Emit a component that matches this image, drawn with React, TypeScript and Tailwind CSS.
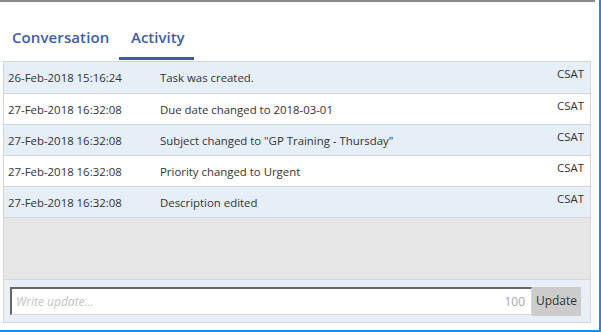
import React from "react";

const rows = [
  { d: "26-Feb-2018 15:16:24", t: "Task was created.", u: "CSAT" },
  { d: "27-Feb-2018 16:32:08", t: "Due date changed to 2018-03-01", u: "CSAT" },
  { d: "27-Feb-2018 16:32:08", t: 'Subject changed to "GP Training - Thursday"', u: "CSAT" },
  { d: "27-Feb-2018 16:32:08", t: "Priority changed to Urgent", u: "CSAT" },
  { d: "27-Feb-2018 16:32:08", t: "Description edited", u: "CSAT" },
];

export default function App() {
  return (
    <div
      className="w-[601px] h-[332px] bg-white border-r-2 border-b-2 border-[#1a8cf0] overflow-hidden"
      style={{ fontFamily: '"Open Sans", "Noto Sans", sans-serif' }}
    >
      <div className="w-[595px] h-[2px] bg-[#888888]" />
      <div className="flex items-end h-[58px] pl-[12px]">
        <div className="text-[15px] font-semibold text-[#3d5daa] pb-[12px] tracking-[0.1px]">Conversation</div>
        <div className="ml-[10px] w-[75px] flex flex-col items-center">
          <div className="text-[15px] font-semibold text-[#3d5daa] pb-[9px] pl-[2px]">Activity</div>
          <div className="h-[3px] w-full bg-[#3d5daa]" />
        </div>
      </div>
      <div className="ml-[3px] mt-[1px] w-[588px] border border-[#d6d6d6] flex flex-col">
        {rows.map((r, i) => (
          <div
            key={i}
            className={`h-[31px] flex text-[11.4px] text-[#333333] ${i % 2 === 0 ? "bg-[#e6eef7]" : "bg-white"} ${i > 0 ? "border-t border-[#d6d6d6]" : ""}`}
          >
            <div className="w-[156px] pl-[4px] pt-[7px]">{r.d}</div>
            <div className="flex-1 pt-[7px]">{r.t}</div>
            <div className="pr-[6px] pt-[3px]">{r.u}</div>
          </div>
        ))}
        <div className="h-[62px] bg-[#e6e6e6] border-t border-[#d6d6d6]" />
        <div className="h-[43px] bg-[#e8eff7] border-t border-[#d6d6d6] flex items-center pl-[6px] pr-[6px]">
          <div className="w-[522px] h-[28px] bg-white border-t-2 border-l-2 border-[#666666] border-r border-b border-r-[#d8d8d8] border-b-[#d8d8d8] flex items-center justify-between px-[4px] text-[12px]">
            <span className="italic text-[#c4c4c4]">Write update...</span>
            <span className="text-[#a8a8a8] pr-[2px]">100</span>
          </div>
          <div className="w-[49px] h-[29px] bg-[#cccccc] text-[12px] text-[#333333] flex items-center justify-center">Update</div>
        </div>
      </div>
    </div>
  );
}
